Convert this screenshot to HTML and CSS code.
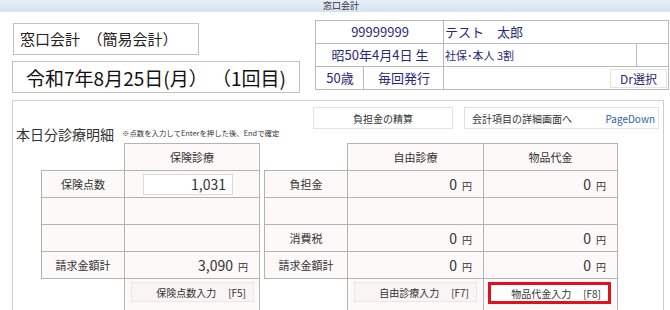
FILE: index.html
```html
<!DOCTYPE html>
<html lang="ja">
<head>
  <meta charset="utf-8">
  <title>窓口会計</title>
  <link rel="stylesheet" href="styles.css">
</head>
<body>
  <div class="titlebar">窓口会計</div>

  <div class="top">
    <div class="top-left">
      <div class="mode-box">窓口会計　（簡易会計）</div>
      <div class="date-box">令和7年8月25日(月）&nbsp;（1回目)</div>
    </div>

    <table class="patient">
      <colgroup>
        <col style="width:48px">
        <col style="width:80px">
        <col style="width:193px">
        <col style="width:32px">
      </colgroup>
      <tr>
        <td class="center" colspan="2">99999999</td>
        <td colspan="2">テスト　太郎</td>
      </tr>
      <tr>
        <td class="center" colspan="2">昭50年4月4日 生</td>
        <td class="small">社保･本人 3割</td>
        <td></td>
      </tr>
      <tr>
        <td class="center">50歳</td>
        <td class="center">毎回発行</td>
        <td colspan="2" class="btn-cell"><button class="dr-btn">Dr選択</button></td>
      </tr>
    </table>
  </div>

  <div class="panel">
    <div class="panel-head">
      <h2 class="heading">本日分診療明細</h2>
      <span class="note">※点数を入力してEnterを押した後、Endで確定</span>
      <div class="head-buttons">
        <button class="plain-btn settle-btn">負担金の精算</button>
        <button class="plain-btn detail-btn">
          <span>会計項目の詳細画面へ</span>
          <span class="key">PageDown</span>
        </button>
      </div>
    </div>

    <div class="sheets">
      <table class="sheet insurance">
        <colgroup>
          <col style="width:83px">
          <col style="width:134px">
        </colgroup>
        <tr class="head-row">
          <td class="blank"></td>
          <th>保険診療</th>
        </tr>
        <tr>
          <td class="label">保険点数</td>
          <td class="input-cell"><div class="points">1,031</div></td>
        </tr>
        <tr><td></td><td></td></tr>
        <tr><td></td><td></td></tr>
        <tr>
          <td class="label">請求金額計</td>
          <td class="amount">3,090<span class="yen">円</span></td>
        </tr>
        <tr class="action-row">
          <td class="blank"></td>
          <td><button class="key-btn">保険点数入力<span class="fkey">[F5]</span></button></td>
        </tr>
      </table>

      <table class="sheet extras">
        <colgroup>
          <col style="width:83px">
          <col style="width:136px">
          <col style="width:134px">
        </colgroup>
        <tr class="head-row">
          <td class="blank"></td>
          <th>自由診療</th>
          <th>物品代金</th>
        </tr>
        <tr>
          <td class="label">負担金</td>
          <td class="amount">0<span class="yen">円</span></td>
          <td class="amount">0<span class="yen">円</span></td>
        </tr>
        <tr><td></td><td></td><td></td></tr>
        <tr>
          <td class="label">消費税</td>
          <td class="amount">0<span class="yen">円</span></td>
          <td class="amount">0<span class="yen">円</span></td>
        </tr>
        <tr>
          <td class="label">請求金額計</td>
          <td class="amount">0<span class="yen">円</span></td>
          <td class="amount">0<span class="yen">円</span></td>
        </tr>
        <tr class="action-row">
          <td class="blank"></td>
          <td><button class="key-btn">自由診療入力<span class="fkey">[F7]</span></button></td>
          <td><button class="key-btn active">物品代金入力<span class="fkey">[F8]</span></button></td>
        </tr>
      </table>
    </div>
  </div>
</body>
</html>
```

FILE: styles.css
```css
body {
  margin: 0;
  width: 670px;
  height: 310px;
  overflow: hidden;
  background: #fff;
  font-family: "Noto Sans CJK JP", "Noto Sans", sans-serif;
  color: #333;
}

.titlebar {
  height: 12px;
  padding-left: 323px;
  background: linear-gradient(#e6eef7, #d5e2ef);
  font-size: 9px;
  line-height: 11px;
  color: #333;
}

/* Header area */
.top {
  display: flex;
  height: 88px;
}

.top-left {
  display: flex;
  flex-direction: column;
  align-items: flex-start;
  gap: 6px;
  padding: 11px 0 0 12px;
}

.mode-box {
  width: 186px;
  height: 32px;
  margin-left: 1px;
  padding-left: 6px;
  box-sizing: border-box;
  border: 1px solid #c2c2c2;
  font-size: 15px;
  line-height: 30px;
  color: #222;
}

.date-box {
  width: 288px;
  height: 32px;
  box-sizing: border-box;
  border: 1px solid #c2c2c2;
  font-size: 19px;
  line-height: 32px;
  text-align: center;
  color: #111;
}

.patient {
  width: 353px;
  margin: 8px 0 0 15px;
  border-collapse: collapse;
  table-layout: fixed;
  align-self: flex-start;
}

.patient td {
  height: 22px;
  padding: 0 0 0 1px;
  border: 1px solid #b9b9b9;
  font-size: 13px;
  line-height: 20px;
  color: #28287a;
  white-space: nowrap;
}

.patient .center {
  text-align: center;
}

.patient .small {
  font-size: 11px;
}

.patient .btn-cell {
  text-align: right;
  padding-right: 1px;
}

.dr-btn {
  width: 57px;
  height: 19px;
  padding: 0;
  border: 1px solid #e4e4e4;
  background: #fff;
  font-family: inherit;
  font-size: 12px;
  line-height: 17px;
  color: #28287a;
  vertical-align: middle;
}

/* Detail panel */
.panel {
  width: 652px;
  height: 212px;
  margin-left: 12px;
  box-sizing: border-box;
  border: 1px solid #cfcfcf;
}

.panel-head {
  display: flex;
  align-items: flex-end;
  height: 42px;
  padding-left: 3px;
}

.heading {
  margin: 0;
  font-size: 14px;
  font-weight: normal;
  line-height: 18px;
  color: #333;
}

.note {
  margin: 0 0 5px 8px;
  font-size: 7.4px;
  line-height: 10px;
  color: #333;
}

.head-buttons {
  display: flex;
  gap: 11px;
  align-self: flex-start;
  margin: 6px 4px 0 auto;
}

.plain-btn {
  height: 22px;
  border: 1px solid #e2e2e2;
  background: #fff;
  font-family: inherit;
  font-size: 10px;
  color: #333;
  padding: 0;
}

.settle-btn {
  width: 140px;
}

.detail-btn {
  display: flex;
  align-items: center;
  justify-content: space-between;
  width: 195px;
  padding: 0 3px 0 7px;
}

.detail-btn .key {
  color: #2f5faa;
}

/* Tables */
.sheets {
  display: flex;
  gap: 4px;
  padding-left: 28px;
}

.sheet {
  border-collapse: collapse;
  table-layout: fixed;
}

.sheet td,
.sheet th {
  height: 26px;
  padding: 0;
  border: 1px solid #b3b3b3;
  background: #fcf9f8;
  font-size: 11px;
  font-weight: normal;
  color: #333;
}

.sheet .blank {
  border: none;
  background: transparent;
}

.sheet .label {
  text-align: center;
}

.sheet .amount {
  text-align: right;
  padding-right: 11px;
  font-size: 14px;
}

.yen {
  margin-left: 5px;
  font-size: 10px;
}

.input-cell {
  padding-left: 18px !important;
}

.points {
  width: 90px;
  height: 21px;
  box-sizing: border-box;
  padding-right: 6px;
  border: 1px solid #d9d9d9;
  background: #fff;
  text-align: right;
  font-size: 14px;
  line-height: 19px;
}

.sheet .action-row td {
  height: 29px;
  vertical-align: top;
  padding: 3px 5px 0 6px;
}

.key-btn {
  display: flex;
  justify-content: flex-end;
  align-items: center;
  width: 123px;
  height: 20px;
  padding: 0 7px 0 0;
  border: 1px solid #ebe6e4;
  background: #f8f5f4;
  font-family: inherit;
  font-size: 10px;
  color: #333;
}

.key-btn.active {
  height: 22px;
  margin-left: -2px;
  border: 3px solid #e3101c;
  background: #fff;
}

.fkey {
  margin-left: 12px;
}
```
